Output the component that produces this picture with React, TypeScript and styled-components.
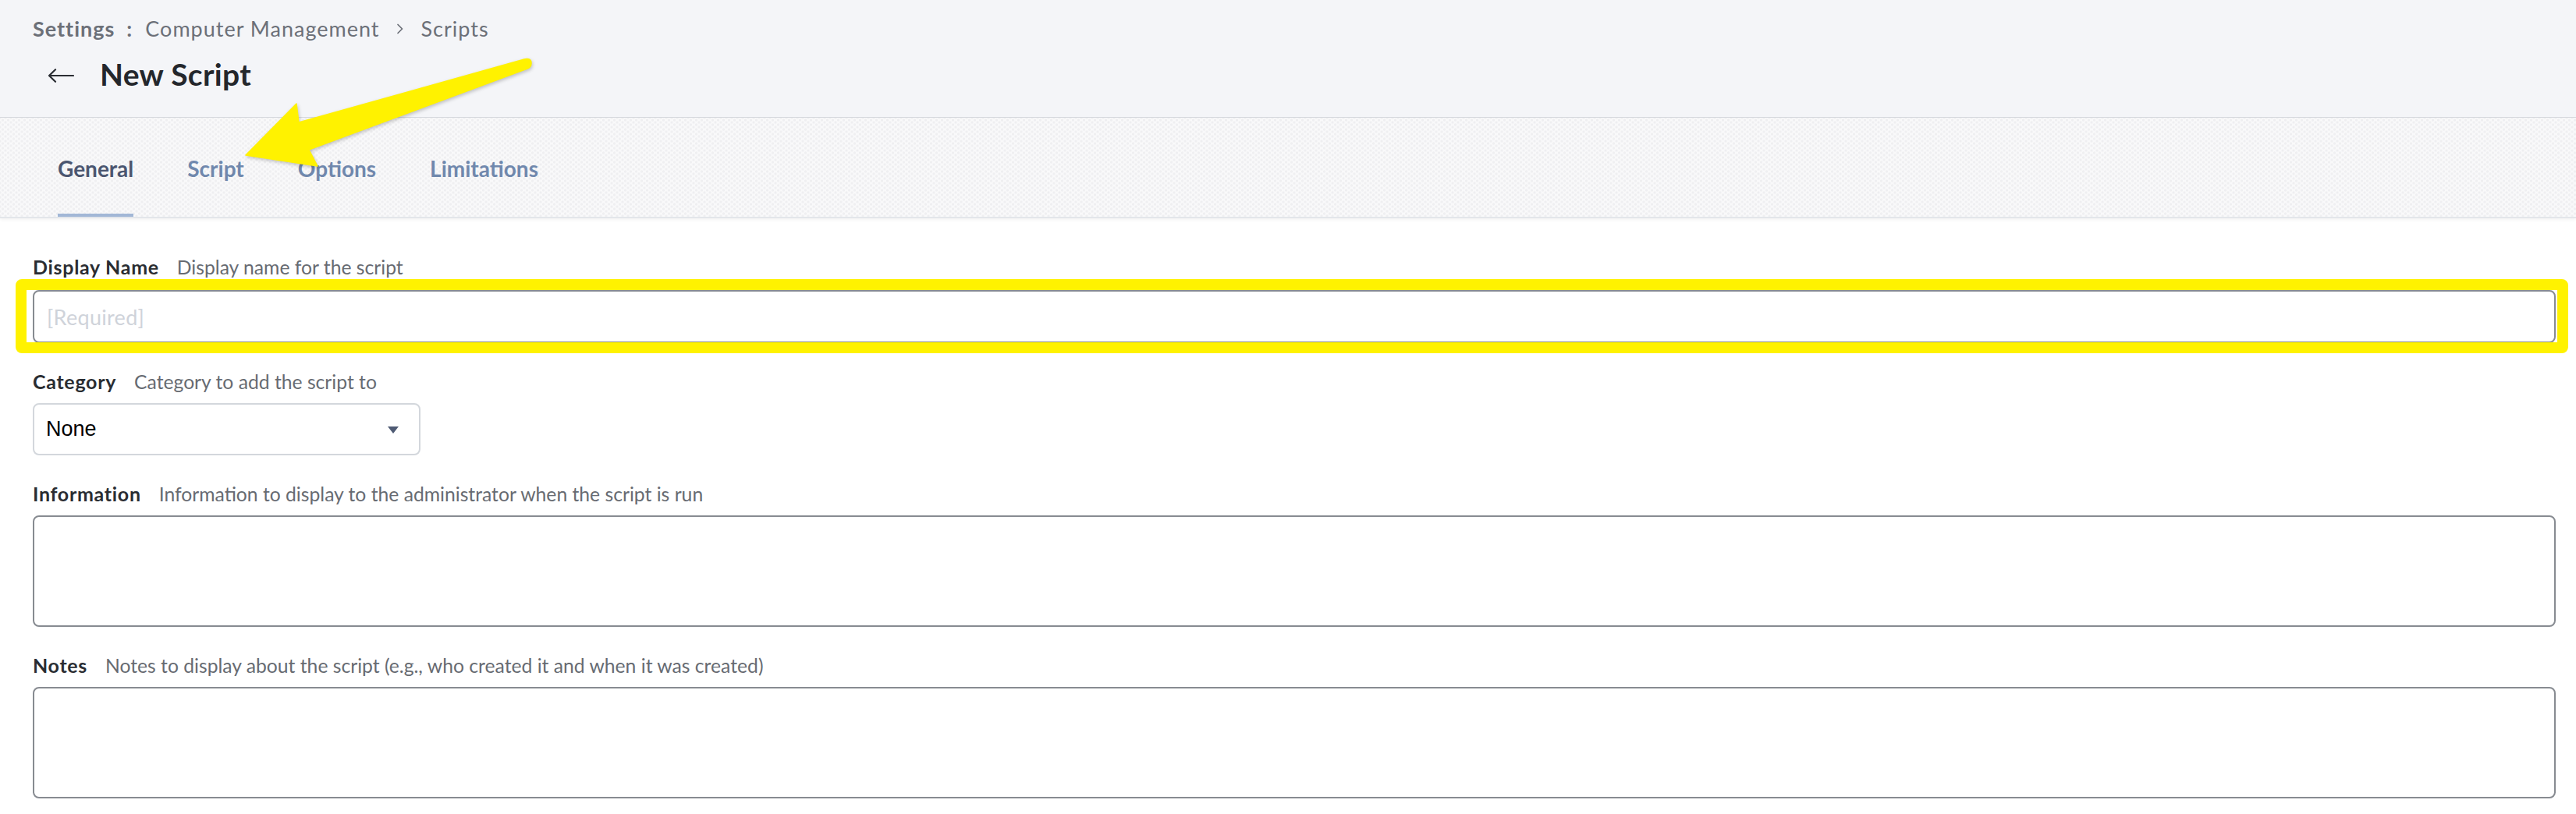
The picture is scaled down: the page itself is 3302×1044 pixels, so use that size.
import React from "react";
import styled, { createGlobalStyle } from "styled-components";

const GlobalStyle = createGlobalStyle`
  html, body {
    margin: 0;
    padding: 0;
    background: #ffffff;
    font-family: "Lato", "Open Sans", sans-serif;
  }
  * { box-sizing: border-box; }
`;

const Page = styled.div`
  position: relative;
  width: 100%;
  min-height: 1044px;
  background: #ffffff;
`;

const Header = styled.header`
  background: #f4f5f8;
  padding: 21px 0 31px 42px;
  border-bottom: 1px solid #d6d9de;
`;

const Breadcrumb = styled.nav`
  display: flex;
  align-items: center;
  height: 32px;
  font-size: 27px;
  line-height: 32px;
  letter-spacing: 1px;
  color: #6c7078;
`;

const Crumb = styled.span<{ $strong?: boolean }>`
  font-weight: ${(p) => (p.$strong ? 700 : 400)};
`;

const Colon = styled.span`
  font-weight: 700;
  margin: 0 16px 0 15px;
`;

const ChevronWrap = styled.span`
  display: inline-flex;
  align-items: center;
  margin: 0 23px 0 21px;
`;

const TitleRow = styled.div`
  display: flex;
  align-items: center;
  gap: 33px;
  margin-top: 18px;
  padding-left: 19px;
  height: 48px;
`;

const BackButton = styled.button`
  display: inline-flex;
  align-items: center;
  justify-content: center;
  border: none;
  background: transparent;
  padding: 0;
  margin-top: 4px;
  color: #2a2d33;
  cursor: pointer;
`;

const Title = styled.h1`
  margin: 0;
  font-size: 39px;
  line-height: 48px;
  font-weight: 700;
  letter-spacing: 0.3px;
  color: #24272c;
`;

const TabBar = styled.div`
  display: flex;
  gap: 69px;
  height: 129px;
  padding-left: 74px;
  border-bottom: 2px solid #e3e6ea;
  box-shadow: 0 2px 4px rgba(0, 0, 0, 0.05);
  background-color: #f9f9fa;
  background-image: radial-gradient(circle, #efeff1 1.3px, transparent 2px),
    radial-gradient(circle, #efeff1 1.3px, transparent 2px);
  background-size: 7px 6px, 7px 6px;
  background-position: 0 0, 3.5px 3px;
`;

const Tab = styled.div<{ $active?: boolean }>`
  padding-top: 48px;
  padding-bottom: 41px;
  font-size: 28px;
  line-height: 34px;
  font-weight: 700;
  color: ${(p) => (p.$active ? "#4b5670" : "#7088ad")};
  border-bottom: 4px solid ${(p) => (p.$active ? "#a2b7d6" : "transparent")};
  cursor: pointer;
`;

const Form = styled.main`
  padding: 48px 26px 0 42px;
`;

const Field = styled.section`
  display: flex;
  flex-direction: column;
  gap: 14px;
  margin-bottom: 35px;
`;

const LabelRow = styled.div`
  display: flex;
  align-items: baseline;
  gap: 23px;
  height: 28px;
  line-height: 28px;
`;

const Label = styled.label`
  font-size: 25px;
  font-weight: 700;
  letter-spacing: 0.7px;
  color: #2a2d32;
`;

const Hint = styled.span`
  font-size: 24.7px;
  font-weight: 400;
  color: #676b72;
`;

const HighlightWrap = styled.div`
  position: relative;
  margin-top: 2px;
`;

const Highlight = styled.div`
  position: absolute;
  top: -14px;
  bottom: -13px;
  left: -22px;
  right: -16px;
  border: 14px solid #fff200;
  border-radius: 8px;
  pointer-events: none;
`;

const TextInput = styled.input`
  display: block;
  width: 100%;
  height: 68px;
  padding: 0 16px;
  border: 2px solid #878b91;
  border-radius: 8px;
  background: #ffffff;
  font-family: "Lato", sans-serif;
  font-size: 27px;
  letter-spacing: 0.3px;
  color: #24272c;
  outline: none;
  &::placeholder {
    color: #cfd3da;
  }
`;

const TextArea = styled.textarea`
  display: block;
  width: 100%;
  height: 143px;
  padding: 14px 16px;
  border: 2px solid #878b91;
  border-radius: 8px;
  background: #ffffff;
  font-family: "Lato", sans-serif;
  font-size: 27px;
  resize: none;
  outline: none;
`;

const SelectBox = styled.div`
  display: flex;
  align-items: center;
  justify-content: space-between;
  width: 497px;
  height: 67px;
  padding: 0 26px 0 15px;
  border: 2px solid #d3d7dc;
  border-radius: 8px;
  background: #ffffff;
  cursor: pointer;
`;

const SelectValue = styled.span`
  font-family: "Liberation Sans", Arial, sans-serif;
  font-size: 27px;
  color: #000000;
`;

const Caret = styled.span`
  width: 0;
  height: 0;
  border-left: 7.5px solid transparent;
  border-right: 7.5px solid transparent;
  border-top: 9px solid #4f5b74;
  margin-top: 2px;
`;

const Annotation = styled.svg`
  position: absolute;
  left: 0;
  top: 0;
  width: 720px;
  height: 240px;
  pointer-events: none;
  overflow: visible;
  filter: drop-shadow(1px 2px 2px rgba(0, 0, 0, 0.22));
`;

const fields = [
  { label: "Information", hint: "Information to display to the administrator when the script is run" },
  { label: "Notes", hint: "Notes to display about the script (e.g., who created it and when it was created)" },
];

export default function App() {
  return (
    <Page>
      <GlobalStyle />
      <Header>
        <Breadcrumb>
          <Crumb $strong>Settings</Crumb>
          <Colon>:</Colon>
          <Crumb>Computer Management</Crumb>
          <ChevronWrap>
            <svg width="9" height="14" viewBox="0 0 9 14" fill="none">
              <path d="M2 1.5 L7.5 7 L2 12.5" stroke="#6c7078" strokeWidth="1.7" strokeLinecap="round" strokeLinejoin="round" />
            </svg>
          </ChevronWrap>
          <Crumb>Scripts</Crumb>
        </Breadcrumb>
        <TitleRow>
          <BackButton aria-label="Back">
            <svg width="34" height="18" viewBox="0 0 34 18" fill="none">
              <path d="M33 9 H2 M10 1.2 L2 9 L10 16.8" stroke="currentColor" strokeWidth="2.2" strokeLinecap="round" strokeLinejoin="round" />
            </svg>
          </BackButton>
          <Title>New Script</Title>
        </TitleRow>
      </Header>

      <TabBar>
        <Tab $active>General</Tab>
        <Tab>Script</Tab>
        <Tab>Options</Tab>
        <Tab>Limitations</Tab>
      </TabBar>

      <Form>
        <Field>
          <LabelRow>
            <Label>Display Name</Label>
            <Hint>Display name for the script</Hint>
          </LabelRow>
          <HighlightWrap>
            <TextInput placeholder="[Required]" />
            <Highlight />
          </HighlightWrap>
        </Field>

        <Field>
          <LabelRow>
            <Label>Category</Label>
            <Hint>Category to add the script to</Hint>
          </LabelRow>
          <SelectBox role="combobox">
            <SelectValue>None</SelectValue>
            <Caret />
          </SelectBox>
        </Field>

        {fields.map((f) => (
          <Field key={f.label}>
            <LabelRow>
              <Label>{f.label}</Label>
              <Hint>{f.hint}</Hint>
            </LabelRow>
            <TextArea />
          </Field>
        ))}
      </Form>

      <Annotation viewBox="0 0 720 240">
        <path
          d="M315 199 L380 133 L383 157 L672 76 Q681 74 681 81 Q681 86 676 88 L396 192 L407 213 Z"
          fill="#fff200"
          stroke="#fff200"
          strokeWidth="1.5"
          strokeLinejoin="round"
        />
      </Annotation>
    </Page>
  );
}
